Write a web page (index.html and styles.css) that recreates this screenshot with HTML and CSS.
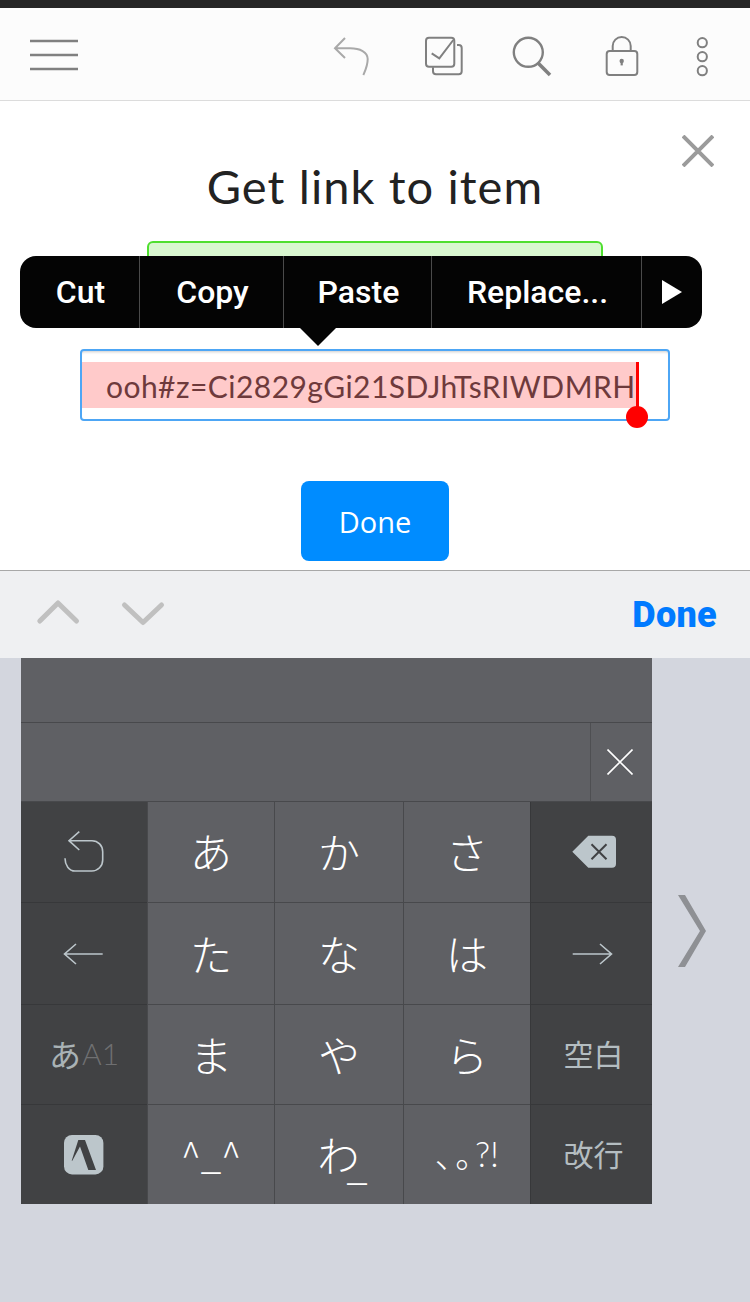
FILE: index.html
```html
<!DOCTYPE html>
<html lang="en">
<head>
    <meta charset="UTF-8">
    <title>Get link to item</title>
    <link rel="stylesheet" href="styles.css">
</head>
<body>
    <div class="status"></div>

    <header class="topbar">
        <svg class="icon menu" viewBox="0 0 48 48"><path d="M0 11H48M0 25H48M0 39H48" stroke="#808080" stroke-width="2.4" fill="none"/></svg>
        <svg class="tool undo" viewBox="0 0 48 48"><path d="M18 8L8 18.3L18 28M8 18.3H23C33 18.3 40.7 22 40.7 29C40.7 36 38 41 36.3 45" stroke="#a9a9a9" stroke-width="2" fill="none"/></svg>
        <svg class="tool check" viewBox="0 0 48 48"><g stroke="#808080" stroke-width="2" fill="none"><rect x="6" y="7.7" width="28.3" height="29" rx="3"/><path d="M37 15h1.7a3 3 0 0 1 3 3v23.3a3 3 0 0 1-3 3H16a3 3 0 0 1-3-3v-4"/><path d="M11.7 23.3L19.3 28.3L33.3 10"/></g></svg>
        <svg class="tool search" viewBox="0 0 48 48"><circle cx="24.3" cy="22.3" r="14.5" stroke="#808080" stroke-width="2.4" fill="none"/><path d="M34.3 33.3L46 45" stroke="#808080" stroke-width="3.6"/></svg>
        <svg class="tool lock" viewBox="0 0 48 48"><g stroke="#808080" stroke-width="2" fill="none"><rect x="8.7" y="21" width="30.6" height="24" rx="3"/><path d="M14.7 21V16a9 9 0 0 1 18 0V21"/></g><circle cx="23.7" cy="31" r="2.2" fill="#808080"/><rect x="22.6" y="31" width="2.2" height="4.4" fill="#808080"/></svg>
        <svg class="tool dots" viewBox="0 0 48 48"><g stroke="#808080" stroke-width="2" fill="none"><circle cx="24.3" cy="12.7" r="4.6"/><circle cx="24.3" cy="26.7" r="4.6"/><circle cx="24.3" cy="40.7" r="4.6"/></g></svg>
    </header>

    <main class="modal">
        <svg class="close" viewBox="0 0 32 32"><path d="M1 1L31 31M31 1L1 31" stroke="#9b9b9b" stroke-width="4"/></svg>
        <h1 class="title">Get link to item</h1>
        <div class="notice"></div>
        <div class="field">
            <span class="selection">ooh#z=Ci2829gGi21SDJhTsRIWDMRH</span>
            <span class="handle"></span>
        </div>
        <button class="done-btn">Done</button>

        <!-- popup over the field -->
        <div class="popup">
            <span class="popup-item item-cut">Cut</span>
            <span class="popup-item item-copy">Copy</span>
            <span class="popup-item item-paste">Paste</span>
            <span class="popup-item item-replace">Replace...</span>
            <span class="popup-item item-more"><svg width="20" height="24" viewBox="0 0 20 24"><path d="M0 0L20 12L0 24Z" fill="#fff"/></svg></span>
            <span class="popup-tail"></span>
        </div>
    </main>

    <div class="accessory">
        <svg class="chev" width="46" height="34" viewBox="0 0 46 34"><path d="M4.8 23L23 5L41.5 23" stroke="#c0c0c0" stroke-width="5" stroke-linecap="round" stroke-linejoin="round" fill="none"/></svg>
        <svg class="chev" width="46" height="34" viewBox="0 0 46 34"><path d="M4.5 7L23 24.5L41.5 7" stroke="#c0c0c0" stroke-width="5" stroke-linecap="round" stroke-linejoin="round" fill="none"/></svg>
        <span class="accessory-done">Done</span>
    </div>

    <div class="kb-area">
        <div class="kb">
            <div class="strip strip-top"></div>
            <div class="strip strip-second">
                <div class="strip-close">
                    <svg width="26" height="26" viewBox="0 0 26 26"><path d="M0.5 0.5L25.5 25.5M25.5 0.5L0.5 25.5" stroke="#fff" stroke-width="1.6"/></svg>
                </div>
            </div>
            <div class="keys">
                <div class="key side">
                    <svg width="48" height="48" viewBox="0 0 48 48"><path d="M19.3 3.7L9 12.7L19.3 22M9 12.7H32C38 12.7 42.7 17.5 42.7 23.7V32C42.7 38 38 43 31.7 43H15C9 43 5 37 5 30.3" stroke="#bcc6cb" stroke-width="1.6" fill="none"/></svg>
                </div>
                <div class="key">あ</div>
                <div class="key">か</div>
                <div class="key">さ</div>
                <div class="key side right">
                    <svg width="48" height="36" viewBox="0 0 48 36"><path d="M2.3 17.7L18.3 1.7H42a4 4 0 0 1 4 4V29.7a4 4 0 0 1-4 4H18.3Z" fill="#bcc6cb"/><path d="M21.5 10.2L36.5 25.2M36.5 10.2L21.5 25.2" stroke="#414244" stroke-width="2"/></svg>
                </div>

                <div class="key side">
                    <svg width="48" height="28" viewBox="0 0 48 28"><path d="M16 4L4.5 14L16 24M4.5 14H42.7" stroke="#bcc6cb" stroke-width="1.6" fill="none"/></svg>
                </div>
                <div class="key">た</div>
                <div class="key">な</div>
                <div class="key">は</div>
                <div class="key side">
                    <svg width="48" height="28" viewBox="0 0 48 28"><path d="M32 4L43.5 14L32 24M43.5 14H4.7" stroke="#bcc6cb" stroke-width="1.6" fill="none"/></svg>
                </div>

                <div class="key side label"><span class="kana">あ</span><span class="latin">A1</span></div>
                <div class="key">ま</div>
                <div class="key">や</div>
                <div class="key">ら</div>
                <div class="key side label right">空白</div>

                <div class="key side">
                    <svg width="40" height="40" viewBox="0 0 40 40"><rect width="39.4" height="39.4" rx="8" fill="#bcc6cb"/><path d="M14.3 5H21L32 35H24.3L16 11.5L8.3 25.7H7.7Z" fill="#414244"/></svg>
                </div>
                <div class="key small">^_^</div>
                <div class="key wa"><span class="wa-kana">わ</span><span class="under">_</span></div>
                <div class="key punct"><span class="marks">、。</span><span class="ascii">?!</span></div>
                <div class="key side label right">改行</div>
            </div>
        </div>
        <svg class="next" width="28" height="72" viewBox="0 0 28 72"><path d="M0 0H7L28 36L7 72H0L22 36Z" fill="#8e9094"/></svg>
    </div>
</body>
</html>
```

FILE: styles.css
```css
* {
    margin: 0;
    padding: 0;
    box-sizing: border-box;
}

body {
    width: 750px;
    height: 1302px;
    overflow: hidden;
    background: #d3d6de;
    font-family: "Lato", "Noto Sans CJK JP", sans-serif;
}

.status {
    height: 8px;
    background: #262626;
}

/* top toolbar */
.topbar {
    height: 93px;
    display: flex;
    align-items: center;
    padding: 0 0 1px 30px;
    background: #fcfcfc;
    border-bottom: 1px solid #dcdcdc;
}

.topbar svg {
    width: 48px;
    height: 48px;
    flex: none;
}

.undo { margin-left: 249px; }
.check { margin-left: 45px; }
.search { margin-left: 36px; }
.lock { margin-left: 46px; }
.dots { margin-left: 32px; }

/* modal */
.modal {
    position: relative;
    height: 469px;
    display: flex;
    flex-direction: column;
    align-items: center;
    background: #fff;
}

.close {
    position: absolute;
    top: 34px;
    right: 36px;
    width: 32px;
    height: 32px;
}

.title {
    margin-top: 55px;
    font-size: 47px;
    line-height: 60px;
    font-weight: 400;
    letter-spacing: 1.1px;
    color: #222;
}

.notice {
    width: 456px;
    height: 60px;
    margin-top: 25px;
    background: #d9f7d0;
    border: 2px solid #4fdf2f;
    border-radius: 6px;
}

.field {
    position: relative;
    width: 590px;
    height: 72px;
    margin-top: 48px;
    padding-top: 11px;
    background: #fff;
    border: 2px solid #4da6f5;
    border-radius: 4px;
    box-shadow: inset 0 3px 3px -2px rgba(0, 0, 0, 0.2);
}

.selection {
    display: inline-block;
    height: 46px;
    padding-left: 24px;
    line-height: 48px;
    font-size: 30px;
    letter-spacing: 0.45px;
    color: #6e3a3c;
    white-space: nowrap;
    background: #ffcaca;
    border-right: 3px solid #f00;
}

.handle {
    position: absolute;
    left: 544px;
    top: 55px;
    width: 22px;
    height: 22px;
    border-radius: 50%;
    background: #f00;
}

.done-btn {
    width: 148px;
    height: 80px;
    margin-top: 60px;
    border: none;
    border-radius: 8px;
    background: #008cff;
    color: #fff;
    font-family: "Open Sans", sans-serif;
    font-size: 29px;
}

/* edit menu */
.popup {
    position: absolute;
    left: 20px;
    top: 155px;
    width: 682px;
    height: 72px;
    display: flex;
    background: #040404;
    border-radius: 16px;
    color: #fff;
    font-family: "Roboto", sans-serif;
    font-weight: 500;
    font-size: 32px;
}

.popup-item {
    display: flex;
    align-items: center;
    justify-content: center;
    padding-left: 2px;
    border-right: 1px solid #4a4a4a;
}

.item-cut { width: 120px; }
.item-copy { width: 144px; }
.item-paste { width: 148px; }
.item-replace { width: 210px; }
.item-more { flex: 1; padding-left: 0; border-right: none; }

.popup-tail {
    position: absolute;
    left: 280px;
    top: 72px;
    border-left: 18px solid transparent;
    border-right: 18px solid transparent;
    border-top: 18px solid #040404;
}

/* bar over the keyboard */
.accessory {
    height: 88px;
    display: flex;
    align-items: center;
    gap: 39px;
    padding: 0 33px 0 35px;
    background: #eff0f2;
    border-top: 1px solid #a8a8a8;
}

.accessory-done {
    margin-left: auto;
    font-family: "Roboto", sans-serif;
    font-weight: 900;
    font-size: 36px;
    letter-spacing: 0.3px;
    color: #007aff;
}

/* keyboard */
.kb-area {
    display: flex;
    padding-left: 21px;
}

.kb {
    width: 631px;
    flex: none;
}

.strip {
    background: #5f6064;
    border-bottom: 1px solid #48494c;
}

.strip-top { height: 65px; }

.strip-second {
    height: 79px;
    display: flex;
    justify-content: flex-end;
}

.strip-close {
    width: 62px;
    display: flex;
    align-items: center;
    justify-content: center;
    padding-right: 3px;
    border-left: 1px solid #4e4f52;
}

.keys {
    display: grid;
    grid-template-columns: 126px 126px 128px 126px 121px;
    grid-template-rows: 100px 101px 99px 99px;
    gap: 1px;
    /* the lines are darker in the two side columns */
    background: linear-gradient(90deg, #37383a 126px, #48494c 126px, #48494c 509px, #37383a 509px);
}

.key {
    display: flex;
    align-items: center;
    justify-content: center;
    padding-bottom: 3px;
    background: #5f6064;
    color: #fff;
    font-family: "Noto Sans CJK JP", sans-serif;
    font-weight: 300;
    font-size: 42px;
}

.key.small { font-size: 37px; }

.wa { padding-left: 7px; }

/* わ_ : the underscore sits low and runs in under the kana */
.wa-kana { letter-spacing: -13px; }

.wa .under {
    margin-top: 20px;
    font-size: 38px;
}

.punct .marks {
    font-size: 34px;
    font-feature-settings: "palt";
    letter-spacing: 3px;
}

.punct .ascii {
    font-family: "Lato", sans-serif;
    font-size: 35px;
}

.side {
    padding-bottom: 0;
    background: #414244;
}

.side.right { padding-left: 4px; }

.label {
    padding-bottom: 4px;
    color: #b4bdc1;
    font-size: 30px;
    font-weight: 400;
}

.label .kana {
    color: #a9b2b5;
    font-size: 32px;
    font-weight: 400;
}

.label .latin {
    margin-left: 1px;
    color: #6f7072;
    font-family: "Lato", sans-serif;
    font-weight: 300;
}

.next {
    margin: 237px 0 0 26px;
    flex: none;
}
```
